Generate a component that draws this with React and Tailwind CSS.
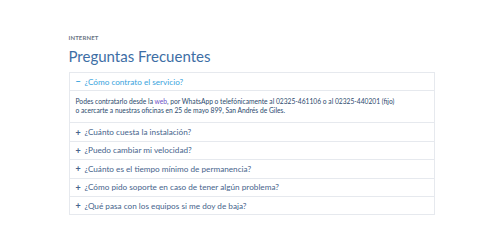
import React, { useState } from "react";

const faqs = [
  {
    q: "¿Cómo contrato el servicio?",
    a: true,
  },
  { q: "¿Cuánto cuesta la instalación?" },
  { q: "¿Puedo cambiar mi velocidad?" },
  { q: "¿Cuánto es el tiempo mínimo de permanencia?" },
  { q: "¿Cómo pido soporte en caso de tener algún problema?" },
  { q: "¿Qué pasa con los equipos si me doy de baja?" },
];

const Answer = () => (
  <div className="border-t border-[#e6e9ee] px-[6px] pt-[6px] pb-[7px] text-[6.7px] leading-[9px] text-[#2c4a6e]">
    Podes contratarlo desde la{" "}
    <a href="#" className="text-[#6b4fc7]">
      web
    </a>
    , por WhatsApp o telefónicamente al 02325-461106 o al 02325-440201 (fijo)
    <br />o acercarte a nuestras oficinas en 25 de mayo 899, San Andrés de Giles.
  </div>
);

export default function App() {
  const [open, setOpen] = useState(0);

  return (
    <div className="min-h-[248px] bg-white font-['Lato',sans-serif]">
      <div className="mx-auto w-[366px] pt-[33px]">
        <p className="text-[6px] leading-[9px] font-bold tracking-[0.02em] text-[#6b7584]">INTERNET</p>
        <h1 className="mt-[5px] text-[15px] leading-[18px] text-[#3d6ea5]">Preguntas Frecuentes</h1>

        {/* Accordion */}
        <div className="mt-[7px] border border-[#e6e9ee]">
          {faqs.map((item, i) => (
            <div key={i} className={i > 0 ? "border-t border-[#e6e9ee]" : ""}>
              <button
                onClick={() => setOpen(open === i ? -1 : i)}
                className={`flex h-[17.4px] w-full items-center gap-[4px] px-[6px] text-left text-[8.2px] ${
                  open === i ? "text-[#3aa4dd]" : "text-[#46648c]"
                }`}
              >
                <span className="w-[5px] text-[9px] font-bold leading-none">{open === i ? "−" : "+"}</span>
                {item.q}
              </button>
              {open === i && item.a && <Answer />}
            </div>
          ))}
        </div>
      </div>
    </div>
  );
}
